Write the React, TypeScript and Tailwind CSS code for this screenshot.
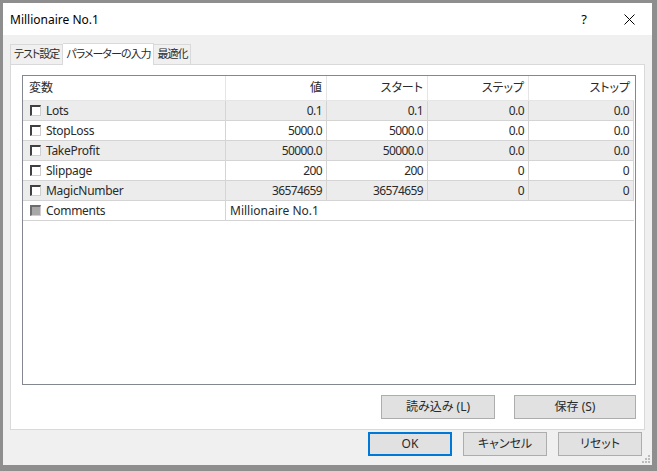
import React from 'react';

type Row = {
  name: string;
  value: string;
  start?: string;
  step?: string;
  stop?: string;
  disabled?: boolean;
};

const rows: Row[] = [
  { name: 'Lots', value: '0.1', start: '0.1', step: '0.0', stop: '0.0' },
  { name: 'StopLoss', value: '5000.0', start: '5000.0', step: '0.0', stop: '0.0' },
  { name: 'TakeProfit', value: '50000.0', start: '50000.0', step: '0.0', stop: '0.0' },
  { name: 'Slippage', value: '200', start: '200', step: '0', stop: '0' },
  { name: 'MagicNumber', value: '36574659', start: '36574659', step: '0', stop: '0' },
  { name: 'Comments', value: 'Millionaire No.1', disabled: true },
];

function CheckBox({ disabled }: { disabled?: boolean }) {
  return (
    <span
      className={`inline-block w-[11px] h-[11px] border-t-2 border-l-2 border-b border-r ${
        disabled
          ? 'bg-[#a8a8a8] border-t-[#6d6d6d] border-l-[#6d6d6d] border-b-[#d0d0d0] border-r-[#d0d0d0]'
          : 'bg-white border-t-[#404040] border-l-[#404040] border-b-[#cfcfcf] border-r-[#cfcfcf]'
      }`}
    />
  );
}

function Button({ label, className = '' }: { label: string; className?: string }) {
  return (
    <button
      className={`h-[24px] bg-[#e1e1e1] border border-[#adadad] text-[12px] flex items-center justify-center ${className}`}
    >
      {label}
    </button>
  );
}

export default function App() {
  const cell = 'h-[20px] border-r border-b border-[#d4d4d4] flex items-center';
  return (
    <div className="w-[657px] h-[471px] bg-[#8e8e8e] pt-[3px] pl-[3px] pr-[5px] pb-[6px] font-['Noto_Sans','Noto_Sans_CJK_JP',sans-serif] [font-feature-settings:'palt'] text-[12px] text-[#2a2a2a] overflow-hidden">
      <div className="w-full h-full bg-[#f0f0f0] flex flex-col relative">
        {/* title bar */}
        <div className="h-[32px] bg-white flex items-center pl-[7px] pt-[1px]">
          <span className="text-[12px] text-black">Millionaire No.1</span>
          <span className="ml-auto mr-[37px] text-[13px] text-black">?</span>
          <svg width="11" height="11" viewBox="0 0 11 11" className="mr-[17px]">
            <path d="M0.5 0.5L10.5 10.5M10.5 0.5L0.5 10.5" stroke="#000" strokeWidth="1" />
          </svg>
        </div>

        <div className="flex-1 flex flex-col px-[7px] pt-[7px]">
          {/* tabs */}
          <div className="flex items-end h-[22px] text-[11px] tracking-[-1px]">
            <div className="h-[20px] px-[3px] border border-b-0 border-[#d9d9d9] bg-[#f0f0f0] flex items-center whitespace-nowrap">
              テスト設定
            </div>
            <div className="h-[22px] px-[3px] -mb-px border border-b-0 border-l-0 border-[#d9d9d9] bg-white flex items-center whitespace-nowrap relative z-10">
              パラメーターの入力
            </div>
            <div className="h-[20px] px-[3px] border border-b-0 border-l-0 border-[#d9d9d9] bg-[#f0f0f0] flex items-center whitespace-nowrap">
              最適化
            </div>
          </div>

          {/* tab panel */}
          <div className="h-[366px] bg-white border border-[#d9d9d9] pt-[10px] pl-[11px] pr-[8px] flex flex-col">
            <div className="h-[310px] border border-[#828790] bg-white">
              <div className="grid grid-cols-[203px_101px_101px_101px_1fr]">
                <div className="h-[25px] border-r border-b border-[#e5e5e5] flex items-center pl-[6px]">変数</div>
                <div className="h-[25px] border-r border-b border-[#e5e5e5] flex items-center justify-end pr-[4px]">値</div>
                <div className="h-[25px] border-r border-b border-[#e5e5e5] flex items-center justify-end pr-[4px]">スタート</div>
                <div className="h-[25px] border-r border-b border-[#e5e5e5] flex items-center justify-end pr-[4px]">ステップ</div>
                <div className="h-[25px] border-b border-[#e5e5e5] flex items-center justify-end pr-[4px] mr-[1px]">ストップ</div>
                {rows.map((r, i) => {
                  const bg = i % 2 === 0 && !r.disabled ? 'bg-[#ececec]' : 'bg-white';
                  return (
                    <React.Fragment key={r.name}>
                      <div className={`${cell} ${bg} pl-[7px] gap-[5px]`}>
                        <CheckBox disabled={r.disabled} />
                        <span className="tracking-[-0.3px]">{r.name}</span>
                      </div>
                      {r.disabled ? (
                        <div className={`${cell} ${bg} col-span-4 pl-[4px] mr-[1px] border-r-0`}>{r.value}</div>
                      ) : (
                        <>
                          <div className={`${cell} ${bg} justify-end pr-[4px] tracking-[-0.6px]`}>{r.value}</div>
                          <div className={`${cell} ${bg} justify-end pr-[4px] tracking-[-0.6px]`}>{r.start}</div>
                          <div className={`${cell} ${bg} justify-end pr-[4px] tracking-[-0.6px]`}>{r.step}</div>
                          <div className={`${cell} ${bg} justify-end pr-[4px] mr-[1px] tracking-[-0.6px]`}>{r.stop}</div>
                        </>
                      )}
                    </React.Fragment>
                  );
                })}
              </div>
            </div>
            <div className="flex justify-end gap-[19px] mt-[10px]">
              <Button label="読み込み (L)" className="w-[114px]" />
              <Button label="保存 (S)" className="w-[122px]" />
            </div>
          </div>

          {/* bottom buttons */}
          <div className="flex justify-end gap-[11px] mt-[2px] pr-[3px]">
            <button className="w-[84px] h-[24px] bg-[#e1e1e1] border-2 border-[#0078d7] text-[12px] flex items-center justify-center">
              OK
            </button>
            <Button label="キャンセル" className="w-[84px]" />
            <Button label="リセット" className="w-[84px]" />
          </div>
        </div>

        {/* size grip */}
        <svg width="10" height="10" viewBox="0 0 10 10" className="absolute right-[1px] bottom-[1px]">
          <rect x="7" y="1" width="2" height="2" fill="#bcbcbc" />
          <rect x="4" y="4" width="2" height="2" fill="#bcbcbc" />
          <rect x="7" y="4" width="2" height="2" fill="#bcbcbc" />
          <rect x="1" y="7" width="2" height="2" fill="#bcbcbc" />
          <rect x="4" y="7" width="2" height="2" fill="#bcbcbc" />
          <rect x="7" y="7" width="2" height="2" fill="#bcbcbc" />
        </svg>
      </div>
    </div>
  );
}
